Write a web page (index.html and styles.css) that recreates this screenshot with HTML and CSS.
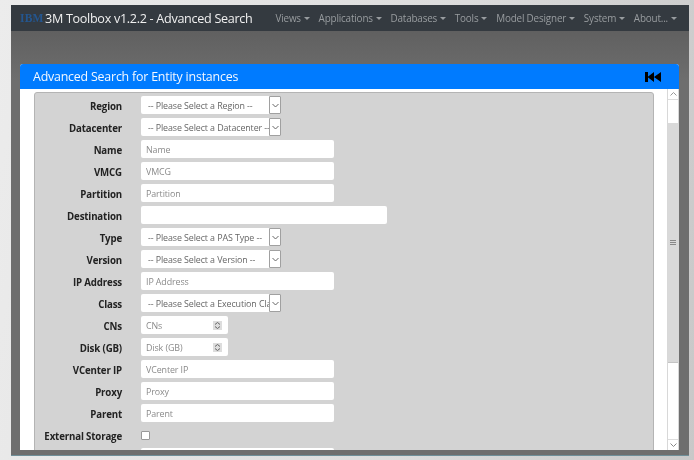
FILE: index.html
```html
<!DOCTYPE html>
<html lang="en">
<head>
<meta charset="utf-8">
<title>3M Toolbox</title>
<link rel="stylesheet" href="styles.css">
</head>
<body>
<div class="window">
  <nav class="navbar">
    <span class="logo">IBM</span>
    <span class="brand">3M Toolbox v1.2.2 - Advanced Search</span>
    <ul class="menu">
      <li>Views</li><li>Applications</li><li>Databases</li><li>Tools</li><li>Model Designer</li><li>System</li><li>About...</li>
    </ul>
  </nav>
  <main class="stage">
    <section class="panel">
      <header class="panel-head">
        <span>Advanced Search for Entity instances</span>
        <svg class="rewind" width="16" height="10" viewBox="0 0 16 10"><path d="M0 0h3v10H0zM2.500 5l6.500-5v10zM9 5l7-5v10z" fill="#000"/></svg>
      </header>
      <div class="panel-body">
        <div class="scroll-area">
          <form class="form-box">
            <div class="row"><label>Region</label><div class="sel"><select><option>-- Please Select a Region --</option></select><span class="chev"><svg width="7" height="5" viewBox="0 0 7 5"><path d="M.5 1l3 3 3-3" fill="none" stroke="#666"/></svg></span></div></div>
            <div class="row"><label>Datacenter</label><div class="sel"><select><option>-- Please Select a Datacenter --</option></select><span class="chev"><svg width="7" height="5" viewBox="0 0 7 5"><path d="M.5 1l3 3 3-3" fill="none" stroke="#666"/></svg></span></div></div>
            <div class="row"><label>Name</label><input class="txt" placeholder="Name"></div>
            <div class="row"><label>VMCG</label><input class="txt" placeholder="VMCG"></div>
            <div class="row"><label>Partition</label><input class="txt" placeholder="Partition"></div>
            <div class="row"><label>Destination</label><input class="txt wide"></div>
            <div class="row"><label>Type</label><div class="sel"><select><option>-- Please Select a PAS Type --</option></select><span class="chev"><svg width="7" height="5" viewBox="0 0 7 5"><path d="M.5 1l3 3 3-3" fill="none" stroke="#666"/></svg></span></div></div>
            <div class="row"><label>Version</label><div class="sel"><select><option>-- Please Select a Version --</option></select><span class="chev"><svg width="7" height="5" viewBox="0 0 7 5"><path d="M.5 1l3 3 3-3" fill="none" stroke="#666"/></svg></span></div></div>
            <div class="row"><label>IP Address</label><input class="txt" placeholder="IP Address"></div>
            <div class="row"><label>Class</label><div class="sel"><select><option>-- Please Select a Execution Class --</option></select><span class="chev"><svg width="7" height="5" viewBox="0 0 7 5"><path d="M.5 1l3 3 3-3" fill="none" stroke="#666"/></svg></span></div></div>
            <div class="row"><label>CNs</label><div class="num"><input placeholder="CNs"><svg class="spin" width="9" height="9" viewBox="0 0 9 9"><rect width="9" height="9" fill="#ddd"/><path d="M2 3.500l2.500-2 2.500 2M2 5.500l2.500 2 2.500-2" fill="none" stroke="#666"/></svg></div></div>
            <div class="row"><label>Disk (GB)</label><div class="num"><input placeholder="Disk (GB)"><svg class="spin" width="9" height="9" viewBox="0 0 9 9"><rect width="9" height="9" fill="#ddd"/><path d="M2 3.500l2.500-2 2.500 2M2 5.500l2.500 2 2.500-2" fill="none" stroke="#666"/></svg></div></div>
            <div class="row"><label>VCenter IP</label><input class="txt" placeholder="VCenter IP"></div>
            <div class="row"><label>Proxy</label><input class="txt" placeholder="Proxy"></div>
            <div class="row"><label>Parent</label><input class="txt" placeholder="Parent"></div>
            <div class="row"><label>External Storage</label><span class="check"></span></div>
            <div class="row"><label></label><input class="txt"></div>
          </form>
        </div>
        <div class="scrollbar">
          <span class="sb-btn"><svg width="7" height="4" viewBox="0 0 7 4"><path d="M.5 3.500l3-3 3 3" fill="none" stroke="#999"/></svg></span>
          <span class="sb-gap"></span>
          <span class="sb-thumb"><svg width="6" height="6" viewBox="0 0 6 6"><path d="M0 .5h6M0 2.500h6M0 4.500h6" stroke="#888"/></svg></span>
          <span class="sb-track"></span>
          <span class="sb-btn down"><svg width="7" height="4" viewBox="0 0 7 4"><path d="M.5 .5l3 3 3-3" fill="none" stroke="#888"/></svg></span>
        </div>
      </div>
    </section>
  </main>
</div>
</body>
</html>
```

FILE: styles.css
```css
* { box-sizing: border-box; }
html, body { height: 100%; }
body {
  margin: 0;
  padding: 5px 5px 4px 11px;
  background: linear-gradient(100deg, #ececec, #dcdcdc 60%, #c8c8c8);
  font-family: "Open Sans", "Noto Sans", sans-serif;
  overflow: hidden;
}
.window {
  height: 451px;
  display: flex;
  flex-direction: column;
  background: #6c6c6c;
  border-bottom: 1px solid #6f8f99;
  filter: blur(0.4px);
}
.navbar {
  flex: none;
  height: 26px;
  background: #343a40;
  display: flex;
  align-items: center;
  padding: 0 0 0 9px;
}
.logo {
  flex: none;
  width: 25px;
  font-family: "Liberation Serif", serif;
  font-weight: 700;
  font-size: 11.500px;
  letter-spacing: .2px;
  color: #24568f;
}
.brand { color: #f0f0f0; font-size: 12.600px; letter-spacing: -.3px; white-space: nowrap; }
.menu {
  list-style: none;
  margin: 0 0 0 23px;
  padding: 0;
  display: flex;
  gap: 8.700px;
  font-size: 9.900px;
  letter-spacing: -.17px;
  color: #989c9f;
  white-space: nowrap;
}
.menu li { display: flex; align-items: center; gap: 3px; }
.menu li::after {
  content: "";
  border-top: 3px solid #989c9f;
  border-left: 3px solid transparent;
  border-right: 3px solid transparent;
}
.stage {
  flex: 1;
  min-height: 0;
  padding: 33px 10px 5px 9px;
  background: linear-gradient(#606060, #6e6e6e 50px);
}
.panel {
  height: 100%;
  display: flex;
  flex-direction: column;
  background: #fff;
  border-radius: 3px 3px 0 0;
  overflow: hidden;
}
.panel-head {
  flex: none;
  height: 25px;
  background: #007bff;
  color: #f4f8ff;
  font-size: 12.400px;
  letter-spacing: -.2px;
  display: flex;
  align-items: center;
  justify-content: space-between;
  padding: 0 18px 0 13px;
}
.panel-body { flex: 1; min-height: 0; display: flex; }
.scroll-area { flex: 1; min-width: 0; overflow: hidden; padding: 3px 13px 0 14px; }
.form-box {
  background: #d3d3d3;
  border: 1px solid #b4b4b4;
  border-radius: 3px;
  padding: 1px 0 0 0;
  display: flex;
  flex-direction: column;
}
.row { flex: none; height: 22px; display: flex; align-items: center; }
.row label {
  flex: none;
  width: 87px;
  padding-top: 2px;
  text-align: right;
  font-size: 9.700px;
  letter-spacing: -.15px;
  font-weight: 700;
  color: #222;
  margin-right: 19px;
  white-space: nowrap;
}
.txt, .num, .sel select {
  height: 18px;
  background: #fff;
  border: 0;
  border-radius: 2px;
  font-family: inherit;
  font-size: 8.900px;
  letter-spacing: -.1px;
  color: #666;
}
.txt { width: 193px; padding: 1px 5px 0; }
.txt.wide { width: 246px; }
input::placeholder { color: #8a8a8a; opacity: 1; }
.sel { display: flex; align-items: center; }
.sel select {
  appearance: none;
  -webkit-appearance: none;
  width: 128px;
  padding: 1px 0 0 7px;
  border-radius: 2px 0 0 2px;
}
.chev {
  width: 12px;
  height: 18px;
  background: #fff;
  border: 1px solid #a0a0a0;
  border-radius: 1px;
  display: flex;
  align-items: center;
  justify-content: center;
}
.num {
  width: 87px;
  display: flex;
  align-items: center;
  padding: 1px 6px 0 5px;
}
.num input {
  flex: 1;
  min-width: 0;
  border: 0;
  padding: 0;
  background: transparent;
  font: inherit;
  letter-spacing: inherit;
}
.spin { flex: none; }
.check {
  width: 9px;
  height: 9px;
  background: #fff;
  border: 1px solid #999;
  border-radius: 1px;
}
.scrollbar {
  flex: none;
  width: 12px;
  display: flex;
  flex-direction: column;
  background: #fff;
  border-left: 1px solid #d8d8d8;
  border-right: 1px solid #d8d8d8;
}
.sb-btn {
  flex: none;
  height: 11px;
  display: flex;
  align-items: center;
  justify-content: center;
  background: #fff;
  border-bottom: 1px solid #ddd;
}
.sb-btn.down { border-top: 1px solid #ddd; border-bottom: 0; }
.sb-gap { flex: none; height: 23px; }
.sb-thumb {
  flex: none;
  height: 240px;
  background: #d9d9d9;
  border-bottom: 1px solid #c4c4c4;
  display: flex;
  align-items: center;
  justify-content: center;
}
.sb-track { flex: 1; background: #fff; }
```
